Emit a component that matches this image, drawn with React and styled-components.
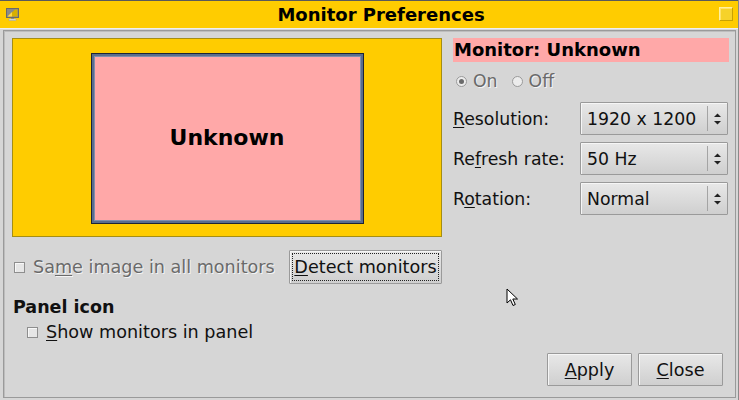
import React from "react";
import styled, { createGlobalStyle } from "styled-components";

const Global = createGlobalStyle`
  html, body { margin: 0; padding: 0; background: #d6d6d6; }
  body { font-family: "DejaVu Sans", "Liberation Sans", sans-serif; }
  * { box-sizing: border-box; }
`;

const Window = styled.div`
  position: relative;
  width: 739px;
  height: 400px;
  display: flex;
  flex-direction: column;
  background: #d6d6d6;
  border-right: 1px solid #8a8a8a;
  overflow: hidden;
`;

const TitleBar = styled.div`
  height: 28px;
  flex: none;
  background: #ffcc00;
  border-top: 1px solid #5a5a5a;
  display: flex;
  align-items: center;
  padding: 0 5px 1px 6px;
`;

const Title = styled.div`
  flex: 1;
  text-align: center;
  font-weight: bold;
  font-size: 18px;
  color: #000;
  padding-left: 24px;
`;

const MaxButton = styled.div`
  width: 14px;
  height: 14px;
  background: #f6d22a;
  border: 1px solid #fff0a0;
  border-right-color: #c9a200;
  border-bottom-color: #c9a200;
  box-shadow: inset 1px 1px 0 #ffe36a;
`;

const Frame = styled.div`
  flex: 1;
  display: flex;
  padding: 1px 2px 2px 3px;
  border-top: 1px solid #efefef;
`;

const Panel = styled.div`
  flex: 1;
  display: flex;
  flex-direction: column;
  border: 1px solid #9a9a9a;
  box-shadow: inset 1px 1px 0 #bdbdbd;
  padding: 7px 6px 11px 8px;
`;

const Top = styled.div`
  display: grid;
  grid-template-columns: 430px 276px;
  column-gap: 11px;
`;

const Column = styled.div`
  display: flex;
  flex-direction: column;
`;

const Preview = styled.div`
  height: 199px;
  background: #ffcc00;
  border: 1px solid #a58e14;
  display: flex;
  justify-content: center;
  align-items: flex-start;
  padding-top: 14px;
`;

const MonitorBox = styled.div`
  width: 273px;
  height: 171px;
  background: #ffa8a8;
  border: 1px solid #1c2436;
  box-shadow: inset 0 0 0 2px #5a6d8d, inset 0 0 0 3px #7f8fae;
  display: flex;
  align-items: center;
  justify-content: center;
  font-weight: bold;
  font-size: 22px;
  color: #000;
  padding-bottom: 2px;
`;

const ActionRow = styled.div`
  margin-top: 13px;
  display: flex;
  align-items: center;
  justify-content: space-between;
  padding-left: 2px;
`;

const CheckRow = styled.label`
  display: flex;
  align-items: center;
  gap: 8px;
  font-size: 17.6px;
  color: ${(p) => (p.$disabled ? "#6a6a6a" : "#111")};
  text-shadow: ${(p) => (p.$disabled ? "1px 1px 0 #f4f4f4" : "none")};
  padding-left: ${(p) => p.$indent || 0}px;
`;

const CheckBox = styled.span`
  width: 11px;
  height: 11px;
  border: 1px solid #8e8e8e;
  background: #e6e6e6;
  box-shadow: inset 1px 1px 0 #f8f8f8;
  flex: none;
`;

const Button = styled.button`
  font-family: inherit;
  font-size: 17.6px;
  color: #111;
  height: ${(p) => p.$h || 33}px;
  width: ${(p) => p.$w}px;
  border: 1px solid #9a9a9a;
  border-radius: 1px;
  background: linear-gradient(#e8e8e8, #cfcfcf);
  box-shadow: inset 1px 1px 0 #f6f6f6;
  padding: 2px;
  display: flex;
  align-items: stretch;
  cursor: default;
`;

const ButtonInner = styled.span`
  flex: 1;
  display: flex;
  align-items: center;
  justify-content: center;
  white-space: nowrap;
  border: 1px dotted ${(p) => (p.$focus ? "#222" : "transparent")};
`;

const Heading = styled.div`
  margin-top: 13px;
  font-weight: bold;
  font-size: 17.5px;
  color: #111;
  padding-left: 1px;
`;

const Spaced = styled.div`
  margin-top: 5px;
`;

const MonitorLabel = styled.div`
  height: 24px;
  background: #ffa8a8;
  font-weight: bold;
  font-size: 18px;
  color: #000;
  display: flex;
  align-items: center;
  padding-left: 1px;
  padding-bottom: 1px;
`;

const RadioRow = styled.div`
  margin-top: 8px;
  height: 22px;
  display: flex;
  align-items: center;
  padding-left: 3px;
  gap: 14px;
  color: #6a6a6a;
  font-size: 17.3px;
  text-shadow: 1px 1px 0 #f4f4f4;
`;

const RadioItem = styled.span`
  display: flex;
  align-items: center;
  gap: 6px;
`;

const Radio = styled.span`
  width: 11px;
  height: 11px;
  border-radius: 50%;
  border: 1px solid #9a9a9a;
  background: #ececec;
  display: flex;
  align-items: center;
  justify-content: center;
  &::after {
    content: "";
    width: 5px;
    height: 5px;
    border-radius: 50%;
    background: ${(p) => (p.$checked ? "#6a6a6a" : "transparent")};
  }
`;

const Form = styled.div`
  margin-top: 10px;
  display: grid;
  grid-template-columns: 127px 148px;
  row-gap: 7px;
  align-items: center;
`;

const FieldLabel = styled.div`
  font-size: 17.3px;
  color: #111;
`;

const Combo = styled.div`
  height: 33px;
  border: 1px solid #9a9a9a;
  border-radius: 1px;
  background: linear-gradient(#e8e8e8, #cfcfcf);
  box-shadow: inset 1px 1px 0 #f6f6f6;
  display: flex;
  align-items: center;
  font-size: 17.3px;
  color: #111;
`;

const ComboText = styled.span`
  flex: 1;
  padding-left: 6px;
`;

const ComboArrows = styled.span`
  width: 20px;
  align-self: stretch;
  margin: 3px 0;
  border-left: 1px solid #a4a4a4;
  display: flex;
  align-items: center;
  justify-content: center;
`;

const Footer = styled.div`
  margin-top: auto;
  display: flex;
  justify-content: flex-end;
  gap: 6px;
  padding-right: 6px;
`;

const Cursor = styled.svg`
  position: absolute;
  left: 506px;
  top: 288px;
`;

const U = styled.span`
  text-decoration: underline;
  text-underline-offset: 2px;
  text-decoration-thickness: 1px;
`;

const AppIcon = () => (
  <svg width="13" height="13" viewBox="0 0 13 13">
    <rect x="0.5" y="0.5" width="12" height="9" fill="#8a8a8a" stroke="#6a6a6a" />
    <path d="M1.5 8.5 L9 1.5 L11.5 1.5 L11.5 8.5 Z" fill="#d8b000" />
    <path d="M1.5 8.5 L6 4 L6 8.5 Z" fill="#ffd84a" />
    <rect x="5" y="10" width="3" height="1" fill="#888" />
    <rect x="3" y="11" width="7" height="1.5" fill="#e8e8e8" stroke="#999" strokeWidth="0.5" />
  </svg>
);

const Arrows = () => (
  <svg width="9" height="14" viewBox="0 0 9 14">
    <path d="M1 5 L4.5 1.5 L8 5 Z" fill="#222" />
    <path d="M1 9 L4.5 12.5 L8 9 Z" fill="#222" />
  </svg>
);

export default function App() {
  return (
    <>
      <Global />
      <Window>
        <TitleBar>
          <AppIcon />
          <Title>Monitor Preferences</Title>
          <MaxButton />
        </TitleBar>
        <Frame>
          <Panel>
            <Top>
              <Column>
                <Preview>
                  <MonitorBox>Unknown</MonitorBox>
                </Preview>
                <ActionRow>
                  <CheckRow $disabled>
                    <CheckBox />
                    <span>
                      Sa<U>m</U>e image in all monitors
                    </span>
                  </CheckRow>
                  <Button $w={153} $h={34}>
                    <ButtonInner $focus>
                      <span>
                        <U>D</U>etect monitors
                      </span>
                    </ButtonInner>
                  </Button>
                </ActionRow>
                <Heading>Panel icon</Heading>
                <Spaced>
                  <CheckRow $indent={15}>
                    <CheckBox />
                    <span>
                      <U>S</U>how monitors in panel
                    </span>
                  </CheckRow>
                </Spaced>
              </Column>
              <Column>
                <MonitorLabel>Monitor: Unknown</MonitorLabel>
                <RadioRow>
                  <RadioItem>
                    <Radio $checked />
                    On
                  </RadioItem>
                  <RadioItem>
                    <Radio />
                    Off
                  </RadioItem>
                </RadioRow>
                <Form>
                  <FieldLabel>
                    <U>R</U>esolution:
                  </FieldLabel>
                  <Combo>
                    <ComboText>1920 x 1200</ComboText>
                    <ComboArrows>
                      <Arrows />
                    </ComboArrows>
                  </Combo>
                  <FieldLabel>
                    Re<U>f</U>resh rate:
                  </FieldLabel>
                  <Combo>
                    <ComboText>50 Hz</ComboText>
                    <ComboArrows>
                      <Arrows />
                    </ComboArrows>
                  </Combo>
                  <FieldLabel>
                    R<U>o</U>tation:
                  </FieldLabel>
                  <Combo>
                    <ComboText>Normal</ComboText>
                    <ComboArrows>
                      <Arrows />
                    </ComboArrows>
                  </Combo>
                </Form>
              </Column>
            </Top>
            <Footer>
              <Button $w={85}>
                <ButtonInner>
                  <span>
                    <U>A</U>pply
                  </span>
                </ButtonInner>
              </Button>
              <Button $w={85}>
                <ButtonInner>
                  <span>
                    <U>C</U>lose
                  </span>
                </ButtonInner>
              </Button>
            </Footer>
          </Panel>
        </Frame>
        <Cursor width="13" height="20" viewBox="0 0 13 20">
          <path
            d="M1 1 L1 15 L4.5 11.8 L7 17.5 L9.3 16.5 L6.8 11 L11.5 11 Z"
            fill="#fff"
            stroke="#000"
            strokeWidth="1"
            strokeLinejoin="miter"
          />
        </Cursor>
      </Window>
    </>
  );
}
